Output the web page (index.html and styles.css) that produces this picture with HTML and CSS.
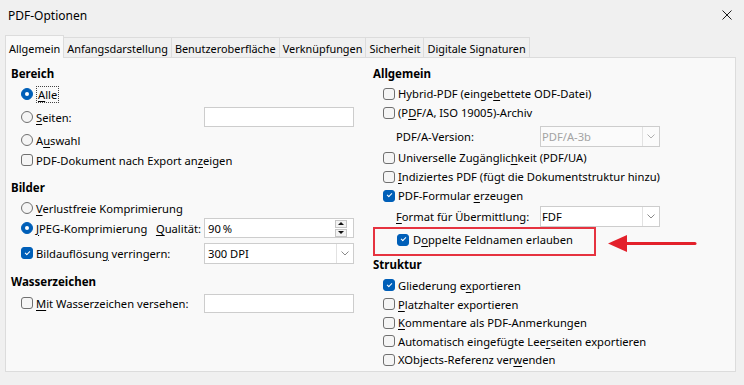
FILE: index.html
```html
<!DOCTYPE html>
<html>
<head>
  <title>PDF-Optionen</title>
  <link rel="stylesheet" href="styles.css">
</head>
<body>
  <div class="dialog">
    <div class="titlebar">
      <span class="title">PDF-Optionen</span>
      <svg class="close" width="10" height="10" viewBox="0 0 10 10"><path d="M0.5 0.5L9.5 9.5M9.5 0.5L0.5 9.5" stroke="#1b1b1b" stroke-width="1"/></svg>
    </div>

    <div class="tabs">
      <span class="tab active">Allgemein</span>
      <span class="tab">Anfangsdarstellung</span>
      <span class="tab">Benutzeroberfläche</span>
      <span class="tab">Verknüpfungen</span>
      <span class="tab">Sicherheit</span>
      <span class="tab">Digitale Signaturen</span>
    </div>

    <div class="panel">
      <!-- left column -->
      <div class="col">
        <div class="section">
          <div class="heading">Bereich</div>
          <div class="opt"><span class="radio on"></span><span class="focus"><u>A</u>lle</span></div>
          <div class="opt seiten"><span class="radio"></span><span class="lbl"><u>S</u>eiten:</span><span class="input"></span></div>
          <div class="opt"><span class="radio"></span><span>A<u>u</u>swahl</span></div>
          <div class="opt"><span class="check"></span><span>PDF-Dokument nach Export an<u>z</u>eigen</span></div>
        </div>

        <div class="section">
          <div class="heading">Bilder</div>
          <div class="opt"><span class="radio"></span><span><u>V</u>erlustfreie Komprimierung</span></div>
          <div class="opt">
            <span class="radio on"></span>
            <span class="lbl split"><span><u>J</u>PEG-Komprimierung</span><span><u>Q</u>ualität:</span></span>
            <span class="spin">
              <span class="spin-value">90&#8239;%</span>
              <span class="spin-btns"><span class="spin-up"></span><span class="spin-down"></span></span>
            </span>
          </div>
          <div class="opt field gap-top">
            <span class="check on"></span>
            <span class="lbl">Bildauflösun<u>g</u> verringern:</span>
            <span class="combo">
              <span class="combo-value">300 DPI</span>
              <span class="combo-btn"><svg width="8" height="5" viewBox="0 0 8 5"><path d="M0.5 0.5L4 4L7.5 0.5" fill="none" stroke="#8a8a8a" stroke-width="1"/></svg></span>
            </span>
          </div>
        </div>

        <div class="section">
          <div class="heading">Wasserzeichen</div>
          <div class="opt field">
            <span class="check"></span>
            <span class="lbl"><u>M</u>it Wasserzeichen versehen:</span>
            <span class="input short"></span>
          </div>
        </div>
      </div>

      <!-- right column -->
      <div class="col right">
        <div class="heading">Allgemein</div>
        <div class="opt"><span class="check"></span><span>Hybrid-PDF (einge<u>b</u>ettete ODF-Datei)</span></div>
        <div class="opt"><span class="check"></span><span>(P<u>D</u>F/A, ISO 19005)-Archiv</span></div>
        <div class="opt sub version">
          <span class="lbl">PDF/A-Version:</span>
          <span class="combo small disabled">
            <span class="combo-value">PDF/A-3b</span>
            <span class="combo-btn"><svg width="8" height="5" viewBox="0 0 8 5"><path d="M0.5 0.5L4 4L7.5 0.5" fill="none" stroke="#b0b0b0" stroke-width="1"/></svg></span>
          </span>
        </div>
        <div class="opt"><span class="check"></span><span>Universelle Zugänglic<u>h</u>keit (PDF/UA)</span></div>
        <div class="opt"><span class="check"></span><span><u>I</u>ndiziertes PDF (fügt die Dokumentstruktur hinzu)</span></div>
        <div class="opt"><span class="check on"></span><span>PDF-Formular <u>e</u>rzeugen</span></div>
        <div class="opt sub format">
          <span class="lbl"><u>F</u>ormat für Übermittlung:</span>
          <span class="combo small">
            <span class="combo-value">FDF</span>
            <span class="combo-btn"><svg width="8" height="5" viewBox="0 0 8 5"><path d="M0.5 0.5L4 4L7.5 0.5" fill="none" stroke="#8a8a8a" stroke-width="1"/></svg></span>
          </span>
        </div>
        <div class="highlight">
          <div class="opt"><span class="check on"></span><span>D<u>o</u>ppelte Feldnamen erlauben</span></div>
        </div>

        <div class="heading struktur">Struktur</div>
        <div class="opt first"><span class="check on"></span><span>Gliederung e<u>x</u>portieren</span></div>
        <div class="opt dense"><span class="check"></span><span><u>P</u>latzhalter exportieren</span></div>
        <div class="opt dense"><span class="check"></span><span><u>K</u>ommentare als PDF-Anmerkungen</span></div>
        <div class="opt dense"><span class="check"></span><span>Automatisch eingefügte Lee<u>r</u>seiten exportieren</span></div>
        <div class="opt dense"><span class="check"></span><span>XObjects-Referenz ver<u>w</u>enden</span></div>
      </div>
    </div>

    <svg class="arrow" width="92" height="21" viewBox="0 0 92 21">
      <path d="M19 10.5H89" stroke="#e3212b" stroke-width="3" stroke-linecap="round"/>
      <path d="M2 10.5L21 2V19Z" fill="#e3212b"/>
    </svg>
  </div>
</body>
</html>
```

FILE: styles.css
```css
* {
  box-sizing: border-box;
}

body {
  margin: 0;
  background: #f0f0f0;
  font-family: 'Noto Sans', 'Open Sans', sans-serif;
  font-size: 11.2px;
  color: #000;
}

.dialog {
  position: relative;
  width: 744px;
  height: 385px;
  overflow: hidden;
  background: #f0f0f0;
}

.titlebar {
  display: flex;
  align-items: center;
  justify-content: space-between;
  height: 30px;
  padding: 0 12px 0 8px;
}

.title {
  font-size: 12px;
}

/* tabs */
.tabs {
  display: flex;
  align-items: flex-end;
  height: 22px;
  margin-top: 5px;
  padding-left: 5px;
  font-size: 10.9px;
}

.tab {
  height: 20px;
  margin-left: -1px;
  padding: 3px 3px 0;
  line-height: 16px;
  border: 1px solid #dcdcdc;
  border-bottom: none;
  background: #f0f0f0;
  white-space: nowrap;
}

.tab:first-child {
  margin-left: 0;
}

.tab.active {
  position: relative;
  z-index: 1;
  height: 23px;
  margin-bottom: -1px;
  padding: 5px 3px 1px;
  background: #f9f9f9;
}

/* panel */
.panel {
  display: grid;
  grid-template-columns: 362px 1fr;
  height: 315px;
  margin: 0 8px 0 5px;
  padding: 8px 5px 0;
  border: 1px solid #dcdcdc;
  background: #f9f9f9;
}

.section + .section {
  margin-top: 10px;
}

.heading {
  height: 16px;
  margin-bottom: 2px;
  line-height: 16px;
  font-size: 11.5px;
  font-weight: bold;
}

.heading.struktur {
  margin-top: 1px;
}

.opt {
  display: flex;
  align-items: center;
  gap: 3px;
  height: 20px;
  padding-left: 10px;
  white-space: nowrap;
}

.opt.seiten {
  height: 26px;
}

.opt.field {
  height: 22px;
}

.opt.gap-top {
  margin-top: 4px;
}

.right .opt {
  height: 19px;
}

.right .opt.sub {
  height: 22px;
  padding-left: 23px;
}

.right .opt.version {
  height: 24px;
  margin-top: 2px;
}

.right .opt.first {
  height: 20px;
}

.right .opt.dense {
  height: 18.5px;
}

.lbl {
  width: 165px;
}

.lbl.split {
  display: flex;
  justify-content: space-between;
}

.sub .lbl {
  width: 141px;
}

u {
  text-decoration: underline;
  text-underline-offset: 2px;
}

.focus {
  padding: 0 1px;
  line-height: 15px;
  border: 1px dotted #444;
}

/* indicators */
.radio,
.check {
  position: relative;
  flex: none;
  width: 12px;
  height: 12px;
  border: 1px solid #707070;
  background: #f5f5f5;
}

.radio {
  border-radius: 50%;
}

.check {
  border-radius: 3px;
}

.radio.on,
.check.on {
  border-color: #005fb8;
  background: #005fb8;
}

.radio.on::after {
  content: "";
  position: absolute;
  left: 3px;
  top: 3px;
  width: 4px;
  height: 4px;
  border-radius: 50%;
  background: #fff;
}

.check.on::after {
  content: "";
  position: absolute;
  left: 3px;
  top: 2.5px;
  width: 4px;
  height: 2px;
  border-left: 1px solid #fff;
  border-bottom: 1px solid #fff;
  transform: rotate(-45deg);
}

/* fields */
.input {
  width: 150px;
  height: 20px;
  border: 1px solid #cdcdcd;
  background: #fff;
}

.input.short {
  height: 19px;
}

.spin {
  display: flex;
  align-items: center;
  width: 150px;
  height: 20px;
  padding-right: 6px;
  border: 1px solid #cdcdcd;
  background: #fff;
}

.spin-value {
  flex: 1;
  padding-left: 3px;
}

.spin-btns {
  display: flex;
  flex-direction: column;
  gap: 1px;
  width: 12px;
}

.spin-up,
.spin-down {
  display: flex;
  align-items: center;
  justify-content: center;
  height: 8px;
  border: 1px solid #c6c6c6;
  background: #f3f3f3;
}

.spin-up::before {
  content: "";
  border-left: 3px solid transparent;
  border-right: 3px solid transparent;
  border-bottom: 3px solid #111;
}

.spin-down::before {
  content: "";
  border-left: 3px solid transparent;
  border-right: 3px solid transparent;
  border-top: 3px solid #111;
}

.combo {
  display: flex;
  width: 150px;
  height: 21px;
  border: 1px solid #cdcdcd;
  background: #fff;
}

.combo.small {
  width: 120px;
}

.combo-value {
  flex: 1;
  padding-left: 3px;
  line-height: 19px;
}

.combo.small .combo-value {
  padding-left: 1px;
}

.combo-btn {
  display: flex;
  align-items: center;
  justify-content: center;
  width: 17px;
  border-left: 1px solid #e2e2e2;
}

.combo.disabled {
  background: #fbfbfb;
}

.combo.disabled .combo-value {
  color: #a3a3a3;
}

/* annotation */
.highlight {
  width: 223px;
  height: 29px;
  padding: 1px 0 0 22px;
  border: 2px solid #e63340;
}

.highlight .opt {
  gap: 4px;
  padding-left: 0;
}

.arrow {
  position: absolute;
  left: 606px;
  top: 233px;
}
```
